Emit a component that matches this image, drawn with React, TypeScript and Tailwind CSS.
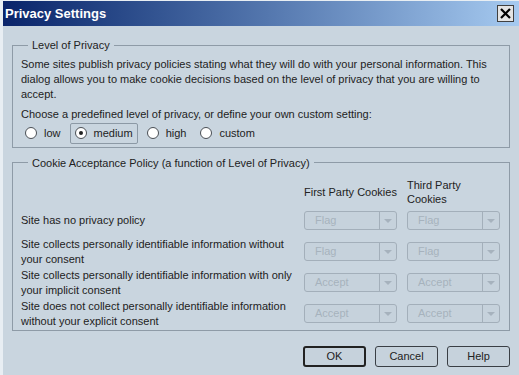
import React from "react";

const rows = [
  { label: ["Site has no privacy policy"], first: "Flag", third: "Flag" },
  {
    label: ["Site collects personally identifiable information without", "your consent"],
    first: "Flag",
    third: "Flag",
  },
  {
    label: ["Site collects personally identifiable information with only", "your implicit consent"],
    first: "Accept",
    third: "Accept",
  },
  {
    label: ["Site does not collect personally identifiable information", "without your explicit consent"],
    first: "Accept",
    third: "Accept",
  },
];

function Radio({ label, checked }: { label: string; checked?: boolean }) {
  return (
    <div
      className={`flex items-center gap-[7px] h-[21px] px-[4px] rounded-[2px] ${
        checked ? "border border-[#8c99a5] bg-[#c9d5df]" : "border border-transparent"
      }`}
    >
      <span className="w-[12px] h-[12px] rounded-full border border-[#4a4f55] bg-white flex items-center justify-center">
        {checked && <span className="w-[4px] h-[4px] rounded-full bg-[#222]" />}
      </span>
      <span>{label}</span>
    </div>
  );
}

function Dropdown({ value }: { value: string }) {
  return (
    <div className="w-[93px] h-[19px] flex border border-[#a3afba] rounded-[3px] bg-[#c6d2dc] text-[#a6b2bd]">
      <div className="flex-1 pl-[10px] flex items-center">{value}</div>
      <div className="w-[17px] border-l border-[#a3afba] flex items-center justify-center">
        <svg width="8" height="4" viewBox="0 0 8 4">
          <path d="M0 0h8L4 4z" fill="#a6b2bd" />
        </svg>
      </div>
    </div>
  );
}

function Button({ label, def }: { label: string; def?: boolean }) {
  return (
    <button
      className={`w-[63px] h-[21px] rounded-[3px] bg-[#c6d2dc] text-[#222] ${
        def ? "border-2 border-[#222]" : "border border-[#3a3f45]"
      }`}
    >
      {label}
    </button>
  );
}

export default function App() {
  return (
    <div
      className="w-[519px] h-[375px] bg-[#c9d5df] flex flex-col text-[11px] text-[#222] border-l-[3px] border-[#e8eef3]"
      style={{ fontFamily: '"Liberation Sans", Arial, sans-serif' }}
    >
      {/* Title bar */}
      <div className="h-[26px] flex items-center justify-between bg-gradient-to-r from-[#0a246a] to-[#a6caf0] pl-[2px] pr-[5px] border-t border-[#e8eef3]">
        <span className="text-white font-bold text-[13px]">Privacy Settings</span>
        <div className="w-[17px] h-[17px] bg-[#e4e4e4] border border-[#404040] flex items-center justify-center">
          <svg width="11" height="11" viewBox="0 0 11 11">
            <path d="M1 1L10 10M10 1L1 10" stroke="#000" strokeWidth="2.2" />
          </svg>
        </div>
      </div>

      <div className="flex-1 flex flex-col pl-[9px] pr-[9px]">
        {/* Level of Privacy */}
        <fieldset className="mt-[11px] border border-[#8e9ba7] pl-[8px] pr-[8px] pb-[3px]">
          <legend className="ml-[7px] px-[4px]">Level of Privacy</legend>
          <p className="leading-[15px] mt-[3px]">
            Some sites publish privacy policies stating what they will do with your personal information. This
            dialog allows you to make cookie decisions based on the level of privacy that you are willing to
            accept.
          </p>
          <p className="mt-[5px] leading-[15px]">
            Choose a predefined level of privacy, or define your own custom setting:
          </p>
          <div className="flex items-center gap-[4px] mt-[1px] -ml-[1px]">
            <Radio label="low" />
            <Radio label="medium" checked />
            <Radio label="high" />
            <Radio label="custom" />
          </div>
        </fieldset>

        {/* Cookie Acceptance Policy */}
        <fieldset className="mt-[7px] border border-[#8e9ba7] pl-[8px] pr-[9px] pb-[7px]">
          <legend className="ml-[7px] px-[4px]">Cookie Acceptance Policy (a function of Level of Privacy)</legend>
          <div className="flex justify-end gap-[10px] mt-[6px] h-[30px] items-center">
            <div className="w-[93px]">First Party Cookies</div>
            <div className="w-[93px] leading-[14px]">
              Third Party
              <br />
              Cookies
            </div>
          </div>
          <div className="flex flex-col gap-[12px] mt-[4px]">
            {rows.map((r, i) => (
              <div key={i} className="flex items-center justify-between h-[19px]">
                <div className="leading-[15px]">
                  {r.label.map((l, j) => (
                    <div key={j}>{l}</div>
                  ))}
                </div>
                <div className="flex gap-[10px]">
                  <Dropdown value={r.first} />
                  <Dropdown value={r.third} />
                </div>
              </div>
            ))}
          </div>
        </fieldset>

        <div className="flex justify-end gap-[9px] mt-[15px]">
          <Button label="OK" def />
          <Button label="Cancel" />
          <Button label="Help" />
        </div>
      </div>
    </div>
  );
}
